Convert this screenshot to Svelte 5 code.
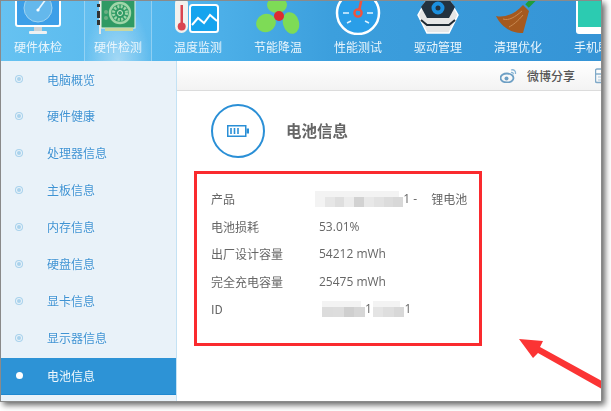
<script>
  const navItems = [
    { label: '硬件体检', kind: 'monitor' },
    { label: '硬件检测', kind: 'card', active: true },
    { label: '温度监测', kind: 'temp' },
    { label: '节能降温', kind: 'fan' },
    { label: '性能测试', kind: 'gauge' },
    { label: '驱动管理', kind: 'driver' },
    { label: '清理优化', kind: 'broom' },
    { label: '手机助手', kind: 'phone' }
  ];
  const sideItems = ['电脑概览', '硬件健康', '处理器信息', '主板信息', '内存信息', '硬盘信息', '显卡信息', '显示器信息', '电池信息'];
  const mosaicA = ['#f3f3f3','#e6e6e6','#dedede','#ececec','#d2d2d2','#e8e8e8','#e2e2e2','#dcdcdc','#d8d8d8'];
  const mosaicB = ['#dcdcdc','#dddddd','#cfcfcf','#d6d6d6'];
  const mosaicC = ['#e4e4e4','#dedede','#d8d8d8'];
</script>

<div class="page">
<div class="frame">
  <header class="topbar">
    {#each navItems as item}
      <div class="nav" class:active={item.active}>
        <div class="icon">
          {#if item.kind === 'monitor'}
            <svg width="46" height="34" viewBox="0 0 46 34">
              <rect x="1" y="-8" width="44" height="33" rx="2" fill="#3d9fe8" stroke="#fff" stroke-width="2"/>
              <circle cx="23" cy="7" r="14" fill="#64b8ec" stroke="#9fd4f2"/>
              <path d="M23 9 L31 -2" stroke="#e8f6ff" stroke-width="1.6"/>
              <circle cx="23" cy="9" r="1.6" fill="#fff"/>
              <rect x="19" y="26" width="8" height="4" fill="#ccd3d6"/>
              <rect x="14" y="30" width="18" height="3" rx="1" fill="#eef1f2"/>
            </svg>
          {:else if item.kind === 'card'}
            <svg width="46" height="34" viewBox="0 0 46 34">
              <rect x="4" y="-4" width="2" height="37" fill="#e8e8e8"/>
              <rect x="2" y="3" width="3" height="3" fill="#333"/>
              <rect x="2" y="10" width="3" height="7" fill="#333"/>
              <rect x="2" y="19" width="3" height="5" fill="#333"/>
              <rect x="6" y="-4" width="34" height="31" fill="#2f9a64" stroke="#e8f2e6"/>
              <circle cx="25" cy="12" r="10" fill="none" stroke="#9fd6a8" stroke-width="2.4"/>
              <circle cx="25" cy="12" r="6.5" fill="none" stroke="#9fd6a8" stroke-width="3" stroke-dasharray="2 1.4"/>
              <circle cx="25" cy="12" r="2.5" fill="none" stroke="#cfeccb"/>
              <circle cx="11" cy="11" r="2" fill="#6cae83"/>
              <circle cx="11" cy="17" r="2" fill="#6cae83"/>
              <rect x="10" y="27" width="28" height="3" fill="#c9d79e"/>
            </svg>
          {:else if item.kind === 'temp'}
            <svg width="46" height="34" viewBox="0 0 46 34">
              <rect x="0" y="-4" width="13" height="36" rx="6.5" fill="#f1f1ee"/>
              <rect x="5.5" y="4" width="2.5" height="18" fill="#d9444f"/>
              <circle cx="6.7" cy="25.5" r="4" fill="#d9444f"/>
              <rect x="15" y="4" width="28" height="27" rx="2.5" fill="#16a4ee" stroke="#fff" stroke-width="2"/>
              <path d="M17 24 L23 17 L29 22 L35 14 L42 20" fill="none" stroke="#fff" stroke-width="2"/>
            </svg>
          {:else if item.kind === 'fan'}
            <svg width="46" height="34" viewBox="0 0 46 34">
              <ellipse cx="22" cy="4" rx="10" ry="8" fill="#7edb56"/>
              <ellipse cx="11" cy="22" rx="10" ry="9" fill="#7edb56" transform="rotate(-25 11 22)"/>
              <ellipse cx="36" cy="22" rx="8" ry="11" fill="#7edb56" transform="rotate(-15 36 22)"/>
              <circle cx="24" cy="15" r="5" fill="#dd2c2f"/>
            </svg>
          {:else if item.kind === 'gauge'}
            <svg width="46" height="34" viewBox="0 0 46 34">
              <circle cx="23" cy="12" r="21" fill="#2a9ee8" stroke="#fff" stroke-width="2.5"/>
              <path d="M8 12 H14 M32 12 H38 M12 22 L16 20 M34 22 L30 20" stroke="#dff3ff" stroke-width="1.5"/>
              <path d="M27 -4 L24 10" stroke="#f0533e" stroke-width="2.6"/>
              <circle cx="23" cy="12" r="3.6" fill="none" stroke="#f0533e" stroke-width="2.4"/>
            </svg>
          {:else if item.kind === 'driver'}
            <svg width="46" height="34" viewBox="0 0 46 34">
              <path d="M11 0 H35 L43 14 L34 32 H12 L3 14 Z" fill="#e6e6e6" stroke="#fff" stroke-width="1.5"/>
              <path d="M6 6 L12 -2 H34 L40 6 L34 17 H12 Z" fill="#233240"/>
              <path d="M6 19 L12 24 H34 L40 19" fill="none" stroke="#1f2a33" stroke-width="2"/>
              <circle cx="23" cy="7" r="4.5" fill="none" stroke="#1b8fdf" stroke-width="4"/>
            </svg>
          {:else if item.kind === 'broom'}
            <svg width="46" height="34" viewBox="0 0 46 34">
              <path d="M32 5 L41 -4" stroke="#1f9e3a" stroke-width="5"/>
              <path d="M28 4 L34 10 L28 32 C18 33 6 26 1 15 C10 17 20 13 28 4 Z" fill="#a5591f"/>
              <path d="M8 18 C14 20 20 16 27 10 M14 26 C18 24 23 20 28 14" stroke="#c98a52" fill="none"/>
            </svg>
          {:else}
            <svg width="46" height="34" viewBox="0 0 46 34">
              <rect x="1" y="-8" width="28" height="41" rx="3" fill="#fff"/>
              <rect x="3" y="-6" width="24" height="32" fill="#2ccbb1"/>
            </svg>
          {/if}
        </div>
        <span>{item.label}</span>
      </div>
    {/each}
  </header>

  <div class="body">
    <aside class="side">
      {#each sideItems as label, i}
        <div class="side-item" class:on={i === 8}>
          <span class="dot"></span>
          <span class="side-label">{label}</span>
        </div>
      {/each}
    </aside>

    <main class="main">
      <div class="toolbar">
        <svg class="weibo" width="18" height="15" viewBox="0 0 18 15">
          <ellipse cx="7" cy="10" rx="6.5" ry="4.5" fill="none" stroke="#6d9fc4" stroke-width="1.8"/>
          <circle cx="6.5" cy="10.5" r="2" fill="#6d9fc4"/>
          <path d="M11 2 C14 1 16 3 15.5 6 M11 4.5 C12.5 4 13.6 5 13.2 6.4" fill="none" stroke="#8ab6d6" stroke-width="1.3"/>
        </svg>
        <span class="share">微博分享</span>
        <svg class="save" width="10" height="16" viewBox="0 0 10 16">
          <path d="M10 1 H2 a1.5 1.5 0 0 0 -1.5 1.5 V13 a1.5 1.5 0 0 0 1.5 1.5 H10" fill="none" stroke="#7fa9c8" stroke-width="1.4"/>
          <path d="M1 6 H10" stroke="#7fa9c8" stroke-width="1.4"/>
          <path d="M3 9 H10 M3 12 H10" stroke="#a9c6dc" stroke-width="1.2"/>
        </svg>
      </div>

      <div class="title-row">
        <div class="circle">
          <svg width="22" height="12" viewBox="0 0 22 12">
            <rect x="0.75" y="0.75" width="18" height="10.5" fill="#fff" stroke="#2a8fd6" stroke-width="1.5"/>
            <rect x="19.5" y="3.5" width="2.5" height="5" fill="#2a8fd6"/>
            <path d="M4 3 V9 M7.5 3 V9 M11 3 V9" stroke="#2a8fd6" stroke-width="1.6"/>
          </svg>
        </div>
        <h1>电池信息</h1>
      </div>

      <section class="redbox">
        <div class="row">
          <span class="k">产品</span>
          <span class="v">
            <span class="mosaic wide">{#each mosaicA as c}<i style="background:{c}"></i>{/each}</span>1 -
            <span class="gap">锂电池</span>
          </span>
        </div>
        <div class="row"><span class="k">电池损耗</span><span class="v">53.01%</span></div>
        <div class="row"><span class="k">出厂设计容量</span><span class="v">54212 mWh</span></div>
        <div class="row"><span class="k">完全充电容量</span><span class="v">25475 mWh</span></div>
        <div class="row">
          <span class="k">ID</span>
          <span class="v id">
            <span class="mosaic m2">{#each mosaicB as c}<i style="background:{c}"></i>{/each}</span>1<span class="mosaic m3">{#each mosaicC as c}<i style="background:{c}"></i>{/each}</span>1
          </span>
        </div>
      </section>
    </main>
  </div>

  <svg class="arrow" width="83" height="52" viewBox="0 0 83 52">
    <path d="M0 0 L24 2 L21 8 L83 42 L83 50 L19 14 L14 19 Z" fill="#fb3434"/>
  </svg>
</div>
</div>

<style>
  :global(body) {
    margin: 0;
    background: #fff;
    overflow: hidden;
  }
  .page {
    width: 611px;
    height: 411px;
    box-sizing: border-box;
    padding: 1px 0 0 1px;
    overflow: hidden;
  }
  .frame {
    position: relative;
    box-sizing: border-box;
    width: 600px;
    height: 400px;
    background: #fff;
    overflow: hidden;
    outline: 1px solid #8a8a8a;
    box-shadow: 3px 3px 6px 1px rgba(0, 0, 0, 0.6);
    font-family: "Noto Sans CJK SC", "Liberation Sans", sans-serif;
    font-size: 12px;
    color: #666;
  }
  .topbar {
    display: flex;
    height: 60px;
    background: linear-gradient(90deg, #66c2f1 0%, #52b5ec 30%, #3c9fdd 55%, #3594d6 100%);
  }
  .nav {
    flex: 0 0 80px;
    height: 60px;
    display: flex;
    flex-direction: column;
    align-items: center;
    color: #e9f5fc;
    box-sizing: border-box;
  }
  .nav:first-child {
    margin-left: -3px;
  }
  .nav.active {
    background: radial-gradient(ellipse at 50% 100%, rgba(255, 255, 255, 0.45), rgba(255, 255, 255, 0.05) 70%);
    border-left: 1px solid rgba(255, 255, 255, 0.3);
    border-right: 1px solid rgba(255, 255, 255, 0.3);
    flex: 0 0 68px;
    margin: 0 6px;
  }
  .icon {
    height: 34px;
    width: 46px;
    overflow: hidden;
  }
  .nav span {
    margin-top: 3px;
    line-height: 18px;
    white-space: nowrap;
    filter: blur(0.3px);
  }
  .body {
    display: flex;
    height: 340px;
  }
  .side {
    width: 175px;
    flex: none;
    background: #e9f2f9;
    border-right: 1px solid #c4e2f4;
    box-sizing: content-box;
    height: 340px;
  }
  .side-item {
    height: 37px;
    display: flex;
    align-items: center;
    color: #3f93d3;
    text-shadow: 0 0 2px #fff;
  }
  .side-item:first-child {
    height: 36px;
    padding-bottom: 0;
  }
  .side-item.on {
    height: 37px;
    box-sizing: border-box;
    margin-top: 2px;
    padding-bottom: 2px;
    background: #2d93d6;
    color: #f2f9fd;
    text-shadow: none;
    border-bottom: 1px solid #1f88d0;
  }
  .dot {
    width: 4px;
    height: 4px;
    margin-left: 16px;
    border-radius: 50%;
    background: #a9d2ec;
    box-shadow: 0 0 0 1px #e9f2f9, 0 0 0 2px #a9d2ec;
  }
  .on .dot {
    width: 7px;
    height: 7px;
    margin-left: 15px;
    background: #fff;
    box-shadow: none;
  }
  .side-label {
    margin-left: 26px;
    filter: blur(0.3px);
  }
  .on .side-label {
    margin-left: 24px;
  }
  .main {
    flex: 1;
    min-width: 0;
  }
  .toolbar {
    height: 30px;
    display: flex;
    align-items: center;
    box-sizing: border-box;
    padding-left: 323px;
    background: linear-gradient(#fff, #f3f3f3);
    border-bottom: 1px solid #dcdcdc;
    color: #555;
  }
  .weibo {
    flex: none;
  }
  .share {
    flex: none;
    white-space: nowrap;
    margin-left: 9px;
    font-weight: 500;
  }
  .save {
    flex: none;
    margin-left: 20px;
  }
  .title-row {
    display: flex;
    align-items: center;
    height: 80px;
    padding-left: 34px;
    box-sizing: border-box;
  }
  .circle {
    width: 54px;
    height: 54px;
    border: 2px solid #2a8fd6;
    border-radius: 50%;
    display: flex;
    align-items: center;
    justify-content: center;
    box-sizing: border-box;
    padding-right: 1px;
  }
  h1 {
    margin: 0 0 2px 21px;
    font-size: 15.5px;
    font-weight: 700;
    color: #666;
    filter: blur(0.3px);
  }
  .redbox {
    margin-left: 17px;
    width: 288px;
    height: 175px;
    box-sizing: border-box;
    border: 3px solid #fa2a2e;
    padding-top: 11px;
  }
  .row {
    display: flex;
    height: 27.5px;
    align-items: center;
    padding-left: 14px;
    white-space: nowrap;
    filter: blur(0.3px);
  }
  .k {
    width: 108px;
    flex: none;
  }
  .v {
    display: flex;
    align-items: center;
    font-family: "Open Sans", "Noto Sans CJK SC", sans-serif;
    white-space: pre;
  }
  .gap {
    margin-left: 11px;
    font-family: "Noto Sans CJK SC", sans-serif;
  }
  .mosaic {
    display: inline-flex;
    height: 10px;
    margin-top: 6px;
    position: relative;
  }
  .mosaic::before {
    content: "";
    position: absolute;
    left: 0;
    right: 4px;
    top: -6px;
    height: 6px;
    background: #f3f3f3;
  }
  .mosaic i {
    display: block;
    width: 9.8px;
    height: 10px;
  }
  .wide {
    margin-left: -4px;
  }
  .id {
    margin-left: 3px;
  }
  .m2 i {
    width: 10.75px;
  }
  .m3 {
    margin-left: 1px;
  }
  .m3 i {
    width: 10.5px;
  }
  .arrow {
    position: absolute;
    left: 518px;
    top: 338px;
  }
</style>
